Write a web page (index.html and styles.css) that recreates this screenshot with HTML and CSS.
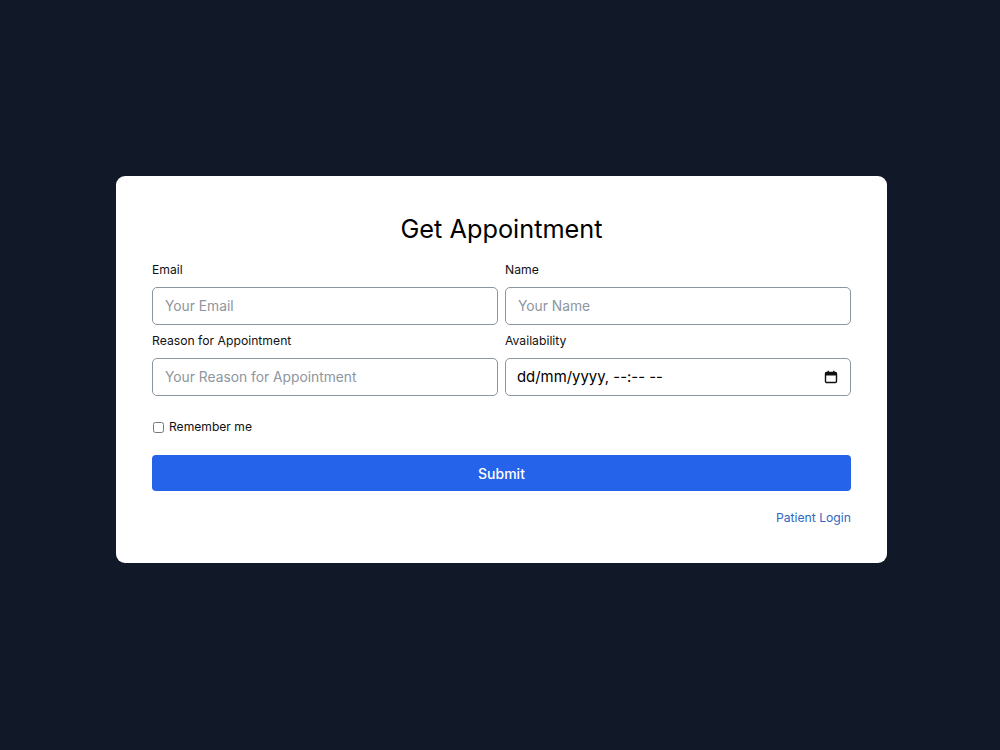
FILE: index.html
```html
<!DOCTYPE html>
<html lang="en">
<head>
    <meta charset="UTF-8">
    <title>Get Appointment</title>
    <link rel="stylesheet" href="styles.css">
</head>
<body>
  <div class="page">
      <form class="card">
          <h2 class="title">Get Appointment</h2>
          <div class="grid">
              <div class="field">
                  <label for="email">Email</label>
                  <input type="email" id="email" placeholder="Your Email">
              </div>
              <div class="field">
                  <label for="name">Name</label>
                  <input type="text" id="name" placeholder="Your Name">
              </div>
              <div class="field">
                  <label for="reason">Reason for Appointment</label>
                  <input type="text" id="reason" placeholder="Your Reason for Appointment">
              </div>
              <div class="field">
                  <label for="when">Availability</label>
                  <div class="date-box">
                      <input type="text" id="when" class="date-input" value="dd/mm/yyyy, --:-- --" readonly>
                      <svg class="date-icon" width="14" height="14" viewBox="0 0 14 14">
                          <rect x="1.5" y="2.5" width="11" height="10" rx="1.2" fill="none" stroke="#111" stroke-width="1.4"/>
                          <rect x="1.5" y="2.5" width="11" height="3" fill="#111"/>
                          <rect x="3.5" y="0.8" width="1.4" height="2.5" fill="#111"/>
                          <rect x="9.1" y="0.8" width="1.4" height="2.5" fill="#111"/>
                      </svg>
                  </div>
              </div>
          </div>
          <label class="remember">
              <input type="checkbox">
              <span>Remember me</span>
          </label>
          <button type="button" class="btn">Submit</button>
          <div class="links">
              <a href="#" class="link">Patient Login</a>
          </div>
      </form>
  </div>
</body>
</html>
```

FILE: styles.css
```css
/* General */

*
{
    box-sizing: border-box;
    margin: 0;
    padding: 0;
    font-family: Inter, "Noto Sans", sans-serif;
}
body
{
    background-color: #111827;
    min-height: 100vh;
}
.page
{
    padding: 176px 0 0 3px;
}

/* Card */

.card
{
    width: 771px;
    margin: 0 auto;
    background-color: white;
    border-radius: 9px;
    padding: 37px 36px 37px;
}
.title
{
    font-size: 25.3px;
    line-height: 32px;
    font-weight: 400;
    color: #000;
    text-align: center;
    margin-bottom: 17px;
}
.grid
{
    display: grid;
    grid-template-columns: 1fr 1fr;
    column-gap: 7px;
    row-gap: 8px;
}
.field
{
    display: flex;
    flex-direction: column;
}
.field > label
{
    font-size: 12.2px;
    line-height: 16px;
    color: #111;
    margin-bottom: 9px;
}
.field input
{
    width: 100%;
    height: 38px;
    border: 1px solid #8a94a3;
    border-radius: 5px;
    padding: 0 12px;
    font-size: 13.8px;
    color: #111;
    outline: none;
}
.field input::placeholder
{
    color: #8e95a0;
}
.date-box
{
    position: relative;
}
.field .date-input
{
    padding-left: 11px;
    font-size: 14.9px;
    color: #000;
}
.date-icon
{
    position: absolute;
    right: 13px;
    top: 12px;
}

/* Remember + submit */

.remember
{
    display: flex;
    align-items: center;
    gap: 3px;
    margin-top: 23px;
    font-size: 12.1px;
    line-height: 16px;
    color: #111;
}
.remember input
{
    width: 11px;
    height: 11px;
    margin: 0 2px 0 1px;
}
.btn
{
    display: block;
    width: 100%;
    height: 36px;
    margin-top: 20px;
    border: none;
    border-radius: 4px;
    background-color: #2563eb;
    color: white;
    font-size: 14px;
    font-weight: 500;
}
.links
{
    display: flex;
    justify-content: flex-end;
    margin-top: 19px;
}
.link
{
    font-size: 12.2px;
    line-height: 16px;
    color: #2e67c2;
    text-decoration: none;
}
```
